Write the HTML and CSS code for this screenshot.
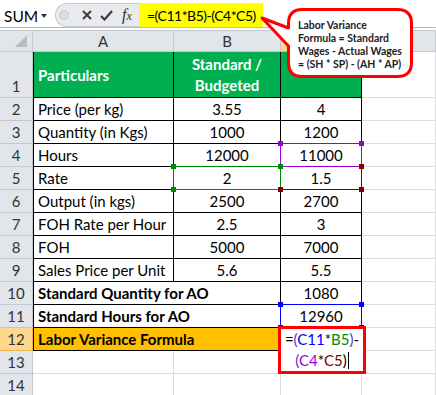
FILE: index.html
```html
<!DOCTYPE html>
<html lang="en">
<head>
    <meta charset="UTF-8">
    <meta name="viewport" content="width=device-width, initial-scale=1.0">
    <title>Labor Variance Formula</title>
    <link rel="stylesheet" href="styles.css">
</head>
<body>

    <div class="formula-bar">
        <div class="name-box">
            <span>SUM</span>
            <span class="drop"></span>
        </div>
        <div class="fx-panel">
            <span class="grip"></span>
            <svg class="icon-x" width="10" height="10" viewBox="0 0 10 10">
                <path d="M1 1 L9 9 M9 1 L1 9" stroke="#3c3c3c" stroke-width="2" fill="none"/>
            </svg>
            <svg class="icon-check" width="13" height="11" viewBox="0 0 13 11">
                <path d="M1 6 L4.5 9.5 L12 1" stroke="#3c3c3c" stroke-width="2.2" fill="none"/>
            </svg>
            <span class="fx">f<span>x</span></span>
        </div>
        <div class="formula-input">=(C11*B5)-(C4*C5)</div>
    </div>

    <div class="sheet">
        <!-- column headers (C is hidden under the callout) -->
        <div class="ch corner"><span class="tri"></span></div>
        <div class="ch">A</div>
        <div class="ch">B</div>
        <div class="ch sel"></div>
        <div class="ch"></div>

        <!-- row 1 -->
        <div class="rh tall">1</div>
        <div class="c d first green">Particulars</div>
        <div class="c d green num two-line">Standard /<br>Budgeted</div>
        <div class="c d green"></div>
        <div class="c"></div>

        <div class="rh">2</div>
        <div class="c d first">Price (per kg)</div>
        <div class="c d num">3.55</div>
        <div class="c d num">4</div>
        <div class="c"></div>

        <div class="rh">3</div>
        <div class="c d first">Quantity (in Kgs)</div>
        <div class="c d num">1000</div>
        <div class="c d num">1200</div>
        <div class="c"></div>

        <div class="rh">4</div>
        <div class="c d first">Hours</div>
        <div class="c d num">12000</div>
        <div class="c d num">11000<span class="ref purple"><i class="tl"></i><i class="tr"></i><i class="bl"></i><i class="br"></i></span></div>
        <div class="c"></div>

        <div class="rh">5</div>
        <div class="c d first">Rate</div>
        <div class="c d num">2<span class="ref green-ref"><i class="tl"></i><i class="tr"></i><i class="bl"></i><i class="br"></i></span></div>
        <div class="c d num">1.5<span class="ref maroon"><i class="tr"></i><i class="bl"></i><i class="br"></i></span></div>
        <div class="c"></div>

        <div class="rh">6</div>
        <div class="c d first">Output (in kgs)</div>
        <div class="c d num">2500</div>
        <div class="c d num">2700</div>
        <div class="c"></div>

        <div class="rh">7</div>
        <div class="c d first">FOH Rate per Hour</div>
        <div class="c d num">2.5</div>
        <div class="c d num">3</div>
        <div class="c"></div>

        <div class="rh">8</div>
        <div class="c d first">FOH</div>
        <div class="c d num">5000</div>
        <div class="c d num">7000</div>
        <div class="c"></div>

        <div class="rh">9</div>
        <div class="c d first">Sales Price per Unit</div>
        <div class="c d num">5.6</div>
        <div class="c d num">5.5</div>
        <div class="c"></div>

        <div class="rh">10</div>
        <div class="c d first span2 bold">Standard Quantity for AO</div>
        <div class="c d num">1080</div>
        <div class="c"></div>

        <div class="rh">11</div>
        <div class="c d first span2 bold">Standard Hours for AO</div>
        <div class="c d num">12960<span class="ref blue"><i class="tl"></i><i class="tr"></i><i class="bl"></i><i class="br"></i></span></div>
        <div class="c"></div>

        <div class="rh sel">12</div>
        <div class="c d first span2 bold orange">Labor Variance Formula</div>
        <div class="c d">
            <div class="editor">
                <span>=<b class="paren">(</b><b class="k-blue">C11</b>*<b class="k-green">B5</b><b class="paren">)</b>-</span>
                <span><b class="paren">(</b><b class="k-purple">C4</b>*<b class="k-maroon">C5</b>)<b class="caret"></b></span>
            </div>
        </div>
        <div class="c"></div>

        <div class="rh">13</div>
        <div class="c"></div>
        <div class="c"></div>
        <div class="c"></div>
        <div class="c"></div>

        <div class="rh">14</div>
        <div class="c"></div>
        <div class="c"></div>
        <div class="c"></div>
        <div class="c"></div>
    </div>

    <div class="callout">
        <svg width="160" height="80" viewBox="0 0 160 80">
            <path d="M44 5.5 H139.5 Q153.5 5.5 153.5 19.5 V58.5 Q153.5 72.5 139.5 72.5 H44 Q30.5 72.5 30.5 58.5 V42 L4 14 L30.5 24 V19.5 Q30.5 5.5 44 5.5 Z"
                  fill="#fff" stroke="#ff0000" stroke-width="3" stroke-linejoin="round"/>
        </svg>
        <p>Labor Variance<br>Formula = Standard<br>Wages - Actual Wages<br>= (SH * SP) - (AH * AP)</p>
    </div>

</body>
</html>
```

FILE: styles.css
```css
body {
    margin: 0;
    font-family: Lato, "Liberation Sans", sans-serif;
    font-size: 15px;
    color: #000;
    background-color: #fff;
    width: 436px;
    height: 395px;
    overflow: hidden;
    position: relative;
}

/* formula bar */
.formula-bar {
    display: flex;
    height: 27px;
    border-bottom: 1px solid #b4bac2;
    margin-bottom: 2px;
}

.name-box {
    width: 53px;
    box-sizing: border-box;
    margin-top: 4px;
    padding: 0 6px 0 4px;
    display: flex;
    align-items: center;
    justify-content: space-between;
    font-size: 15.5px;
}

.name-box .drop {
    width: 0;
    height: 0;
    border-left: 3.5px solid transparent;
    border-right: 3.5px solid transparent;
    border-top: 4px solid #333;
}

.fx-panel {
    width: 83px;
    margin: 3px 0 0 2px;
    display: flex;
    align-items: center;
    background-color: #e8eaed;
    border: 1px solid #c6cbd1;
    border-right: none;
    border-radius: 13px 0 0 13px;
}

.grip {
    width: 8px;
    height: 8px;
    margin-left: 3px;
    border-radius: 50%;
    background-color: #d9dce0;
    border: 1px solid #c4c8cd;
}

.icon-x {
    margin-left: 13px;
}

.icon-check {
    margin-left: 8px;
}

.fx {
    margin-left: 9px;
    font-family: "Liberation Serif", serif;
    font-style: italic;
    font-size: 16px;
    color: #333;
}

.fx span {
    font-size: 12px;
}

.formula-input {
    width: 116px;
    margin-top: 3px;
    padding-left: 8px;
    display: flex;
    align-items: center;
    background-color: #ffff00;
    white-space: nowrap;
    font-size: 14px;
    letter-spacing: -0.5px;
}

/* sheet grid */
.sheet {
    display: grid;
    grid-template-columns: 33px 141px 107px 81px 74px;
    grid-template-rows: 22px 46px repeat(13, 23px);
}

.ch, .rh {
    display: flex;
    align-items: center;
    justify-content: center;
    background-color: #e2e5e9;
    color: #333;
    border-right: 1px solid #c3c8ce;
    border-bottom: 1px solid #c3c8ce;
    box-sizing: border-box;
}

.ch {
    border-top: 1px solid #c3c8ce;
}

.ch.sel, .rh.sel {
    background-color: #fdd88d;
    border-color: #eeb54e;
}

.corner {
    position: relative;
}

.tri {
    position: absolute;
    right: 5px;
    bottom: 4px;
    width: 0;
    height: 0;
    border-left: 12px solid transparent;
    border-bottom: 12px solid #b9bdc3;
}

.rh.tall {
    align-items: flex-end;
    padding-bottom: 2px;
}

.c {
    display: flex;
    align-items: center;
    padding: 0 4px;
    border-right: 1px solid #dadcdd;
    border-bottom: 1px solid #dadcdd;
    box-sizing: border-box;
    white-space: nowrap;
    position: relative;
}

.c.d {
    border-right-color: #000;
    border-bottom-color: #000;
}

.c.first {
    border-left: 1px solid #000;
}

.num {
    justify-content: center;
}

.bold {
    font-weight: bold;
}

.span2 {
    grid-column: span 2;
}

.green {
    background-color: #00b050;
    color: #fff;
    font-weight: bold;
}

.two-line {
    text-align: center;
    line-height: 21px;
}

.orange {
    background-color: #ffc000;
}

/* coloured reference boxes */
.ref {
    position: absolute;
    top: -1px;
    left: -1px;
    right: -1px;
    bottom: -1px;
    border: 1px solid;
    z-index: 2;
}

.ref i {
    position: absolute;
    width: 5px;
    height: 5px;
    background-color: currentColor;
}

.ref .tl { top: -3px; left: -3px; }
.ref .tr { top: -3px; right: -3px; }
.ref .bl { bottom: -3px; left: -3px; }
.ref .br { bottom: -3px; right: -3px; }

.purple { color: #9b00d3; border-color: #9b00d3; }
.green-ref { color: #008a00; border-color: #008a00; }
.maroon { color: #800000; border-color: #800000; border-top-color: transparent; border-left-color: transparent; }
.blue { color: #0000ff; border-color: #0000ff; }

/* in-cell editor */
.editor {
    position: absolute;
    top: -2px;
    left: -3px;
    width: 88px;
    height: 48px;
    box-sizing: border-box;
    border: 3px solid #ff0000;
    background-color: #fff;
    z-index: 3;
    display: flex;
    flex-direction: column;
    align-items: center;
    justify-content: center;
    line-height: 21px;
}

.editor b {
    font-weight: normal;
}

.paren { color: #5b35b8; }
.k-blue { color: #0000ff; }
.k-green { color: #008a00; }
.k-purple { color: #9b00d3; }
.k-maroon { color: #800000; }

.caret {
    display: inline-block;
    width: 1px;
    height: 17px;
    margin-left: 1px;
    vertical-align: -3px;
    background-color: #000;
}

/* callout */
.callout {
    position: absolute;
    left: 258px;
    top: 4px;
    width: 160px;
    height: 80px;
    z-index: 10;
}

.callout svg {
    position: absolute;
    top: 0;
    left: 0;
}

.callout p {
    position: relative;
    margin: 0;
    padding: 15px 0 0 40px;
    font-size: 10.5px;
    font-weight: bold;
    line-height: 13px;
    color: #222;
    white-space: nowrap;
}
```
